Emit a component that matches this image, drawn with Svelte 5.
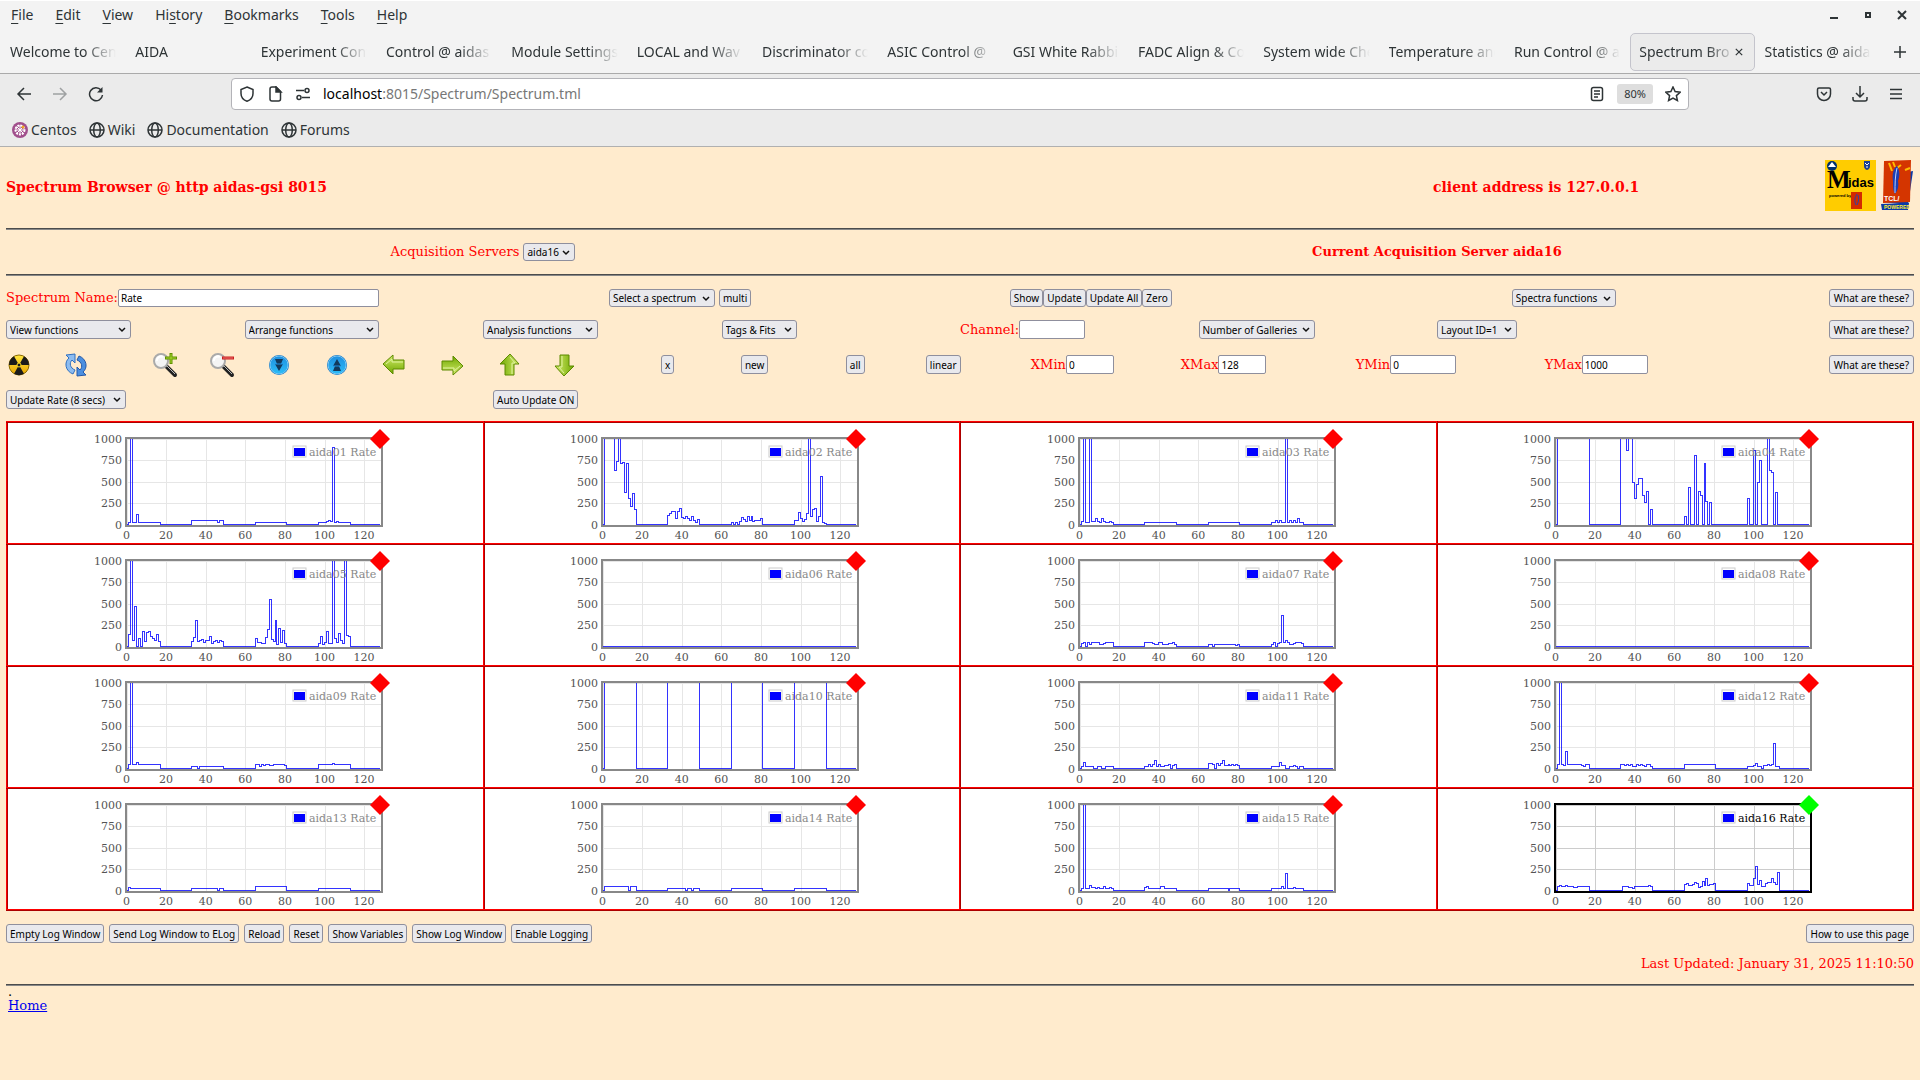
<script lang="ts">
	type Step = [number, number];
	type Gallery = { name: string; active?: boolean; steps: Step[] };

	const menus = [
		['', 'F', 'ile'],
		['', 'E', 'dit'],
		['', 'V', 'iew'],
		['Hi', 's', 'tory'],
		['', 'B', 'ookmarks'],
		['', 'T', 'ools'],
		['', 'H', 'elp']
	];

	const tabs = [
		'Welcome to Cen',
		'AIDA',
		'Experiment Cont',
		'Control @ aidas',
		'Module Settings',
		'LOCAL and Wav',
		'Discriminator co',
		'ASIC Control @',
		'GSI White Rabbi',
		'FADC Align & Co',
		'System wide Che',
		'Temperature and',
		'Run Control @ a',
		'Spectrum Bro',
		'Statistics @ aida'
	];
	let activeTab = $state(13);

	const bookmarks = ['Centos', 'Wiki', 'Documentation', 'Forums'];

	let spectrumName = $state('Rate');
	let channel = $state('');
	let xMin = $state('0');
	let xMax = $state('128');
	let yMin = $state('0');
	let yMax = $state('1000');

	const OFF = 2000; // above the top of the axis, clipped

	// each step is [first bin, counts]; the level holds until the next step
	const galleries: Gallery[] = [
		{ name: 'aida01', steps: [[1, 25], [2, OFF], [3, 25], [5, 120], [6, 25], [17, 0], [33, 50], [46, 25], [47, 50], [49, 0], [65, 25], [81, 0], [97, 25], [101, 35], [102, 50], [103, 30], [104, 900], [105, 25], [106, 35], [107, 25], [113, 0]] },
		{ name: 'aida02', steps: [[1, OFF], [6, 630], [7, 730], [8, OFF], [9, 710], [10, 725], [11, 368], [12, 705], [13, 300], [14, 210], [15, 355], [16, 180], [17, 0], [33, 105], [34, 130], [35, 150], [36, 155], [37, 75], [38, 150], [39, 190], [40, 85], [41, 75], [42, 95], [43, 65], [44, 50], [45, 95], [46, 50], [47, 20], [48, 60], [49, 0], [65, 20], [66, 0], [67, 20], [68, 0], [69, 35], [70, 85], [71, 55], [72, 30], [73, 90], [74, 50], [75, 90], [76, 35], [77, 50], [80, 70], [81, 0], [97, 50], [99, 145], [100, 70], [101, 30], [102, 60], [103, 130], [104, OFF], [105, 95], [106, 180], [107, 190], [108, 30], [109, 90], [110, 560], [111, 20], [112, 10], [113, 0]] },
		{ name: 'aida03', steps: [[1, 35], [2, OFF], [3, 25], [5, OFF], [6, 30], [8, 70], [9, 40], [10, 25], [11, 70], [12, 40], [13, 25], [15, 35], [16, 25], [17, 0], [33, 25], [49, 0], [65, 25], [81, 0], [97, 25], [99, 50], [100, 25], [101, 50], [102, 25], [104, OFF], [105, 25], [106, 50], [107, 25], [108, 50], [109, 25], [110, 65], [111, 25], [113, 0]] },
		{ name: 'aida04', steps: [[1, OFF], [17, 0], [33, OFF], [36, 865], [37, OFF], [39, 490], [40, 305], [41, 460], [42, 530], [43, 540], [44, 340], [45, 260], [46, 380], [47, 0], [48, 180], [49, 0], [65, 90], [66, 0], [67, 430], [68, 0], [70, 800], [71, 0], [72, 380], [73, 340], [74, 0], [75, 705], [76, 270], [77, 0], [78, 255], [79, 0], [97, 300], [98, 0], [100, 860], [101, 0], [102, 490], [103, 750], [104, 0], [107, OFF], [108, 630], [109, 610], [110, 0], [111, 370], [112, 0]] },
		{ name: 'aida05', steps: [[1, 145], [2, OFF], [3, 75], [4, 460], [5, 0], [6, 90], [7, 0], [8, 180], [9, 60], [10, 165], [11, 175], [12, 115], [13, 95], [14, 70], [15, 135], [16, 60], [17, 0], [33, 60], [34, 105], [35, 305], [36, 55], [37, 65], [38, 80], [39, 50], [40, 70], [42, 120], [43, 40], [44, 55], [45, 75], [46, 50], [47, 65], [48, 55], [49, 0], [65, 90], [66, 50], [67, 45], [68, 40], [69, 30], [70, 100], [71, 200], [72, 545], [73, 80], [74, 60], [75, 305], [76, 25], [77, 215], [78, 50], [79, 185], [80, 30], [81, 0], [97, 30], [98, 120], [99, 25], [100, 45], [101, 180], [102, 30], [104, OFF], [105, 90], [106, 45], [107, 150], [108, 65], [109, 30], [110, OFF], [111, 130], [112, 120], [113, 0]] },
		{ name: 'aida06', steps: [] },
		{ name: 'aida07', steps: [[1, 30], [2, 50], [3, 5], [4, 50], [5, 25], [6, 50], [10, 25], [12, 40], [13, 50], [17, 0], [33, 50], [37, 40], [38, 25], [40, 50], [42, 25], [45, 35], [47, 50], [48, 25], [49, 0], [65, 25], [67, 0], [68, 25], [79, 10], [80, 25], [81, 0], [97, 25], [98, 50], [99, 0], [100, 30], [101, 50], [102, 355], [103, 45], [104, 70], [105, 50], [106, 25], [108, 40], [109, 50], [112, 30], [113, 0]] },
		{ name: 'aida08', steps: [] },
		{ name: 'aida09', steps: [[1, 50], [2, OFF], [3, 50], [5, 75], [6, 50], [17, 0], [33, 25], [36, 0], [37, 25], [49, 0], [65, 50], [67, 25], [68, 50], [69, 30], [70, 50], [72, 40], [74, 50], [80, 35], [81, 0], [97, 50], [104, 60], [105, 50], [113, 0]] },
		{ name: 'aida10', steps: [[1, OFF], [17, 0], [33, OFF], [49, 0], [65, OFF], [81, 0], [97, OFF], [113, 0]] },
		{ name: 'aida11', steps: [[1, 25], [2, 75], [3, 25], [7, 0], [9, 25], [11, 0], [13, 25], [17, 0], [33, 25], [35, 50], [36, 25], [37, 45], [38, 90], [39, 25], [40, 45], [41, 25], [43, 35], [45, 50], [46, 0], [47, 30], [48, 50], [49, 0], [65, 60], [67, 50], [68, 0], [69, 60], [70, 30], [71, 60], [72, 95], [73, 40], [75, 50], [76, 30], [77, 50], [78, 35], [79, 45], [80, 30], [81, 0], [97, 25], [101, 75], [102, 30], [104, 0], [106, 25], [108, 40], [109, 25], [110, 0], [111, 25], [113, 0]] },
		{ name: 'aida12', steps: [[1, 50], [2, OFF], [3, 50], [4, 30], [5, 200], [6, 50], [13, 40], [14, 25], [15, 50], [17, 0], [33, 50], [35, 30], [36, 50], [37, 35], [38, 50], [39, 25], [41, 50], [42, 30], [43, 50], [44, 30], [45, 25], [46, 50], [48, 25], [49, 0], [65, 50], [81, 0], [97, 25], [100, 35], [101, 60], [102, 25], [104, 0], [105, 30], [107, 50], [108, 30], [109, 50], [110, 285], [111, 25], [113, 0]] },
		{ name: 'aida13', steps: [[1, 40], [2, 25], [17, 0], [33, 25], [46, 0], [47, 25], [49, 0], [65, 50], [81, 0], [97, 25], [113, 0]] },
		{ name: 'aida14', steps: [[1, 50], [13, 0], [14, 50], [17, 0], [33, 25], [42, 0], [43, 25], [45, 0], [46, 25], [49, 0], [65, 25], [81, 0], [97, 25], [113, 0]] },
		{ name: 'aida15', steps: [[1, 25], [2, OFF], [3, 25], [5, 60], [6, 35], [8, 25], [9, 40], [10, 25], [12, 45], [13, 25], [15, 35], [16, 25], [17, 0], [33, 30], [34, 50], [35, 25], [41, 50], [43, 25], [49, 0], [65, 25], [75, 0], [76, 25], [81, 0], [97, 25], [102, 50], [103, 25], [104, 200], [105, 25], [108, 35], [109, 25], [113, 0]] },
		{ name: 'aida16', active: true, steps: [[1, 50], [2, 60], [3, 50], [5, 60], [6, 45], [7, 50], [9, 30], [11, 50], [17, 0], [34, 50], [37, 40], [39, 25], [40, 50], [47, 60], [48, 50], [49, 0], [65, 75], [66, 85], [67, 60], [69, 70], [70, 90], [71, 85], [72, 30], [73, 50], [74, 100], [75, 60], [76, 140], [77, 60], [78, 75], [80, 80], [81, 0], [97, 80], [98, 55], [100, 145], [101, 275], [102, 70], [103, 120], [104, 50], [106, 80], [107, 95], [109, 140], [110, 90], [111, 75], [112, 205], [113, 0]] }
	];

	const rows = [0, 4, 8, 12].map((i) => galleries.slice(i, i + 4));
	const xTicks = [0, 20, 40, 60, 80, 100, 120];
	const yTicks = [0, 250, 500, 750, 1000];

	const px = (bin: number) => 31.5 + bin * 1.98;
	const py = (counts: number) => 101.5 - counts * 0.086;

	function trace(steps: Step[]) {
		let d = `M${px(0)} ${py(0)}`;
		for (const [bin, counts] of steps) d += `H${px(bin)}V${py(counts)}`;
		return d + `H${px(128)}`;
	}

	const logButtons = [
		'Empty Log Window',
		'Send Log Window to ELog',
		'Reload',
		'Reset',
		'Show Variables',
		'Show Log Window',
		'Enable Logging'
	];
</script>

{#snippet picker(label: string, width: number)}
	<span class="picker" style:width="{width}px">
		<select aria-label={label}>
			<option>{label}</option>
		</select>
		<svg viewBox="0 0 8 6" aria-hidden="true"><path d="M1 1l3 3 3-3" /></svg>
	</span>
{/snippet}

{#snippet arrow()}
	<path d="M2 12L12 3v5h11v9H12v5z" fill="url(#green)" stroke="#5d8a00" />
	<path d="M5 12l6-5v3h11" fill="none" stroke="#dff2a0" />
{/snippet}

{#snippet disc()}
	<circle cx="13" cy="13" r="10" fill="#0a72c4" />
	<circle cx="13" cy="13" r="9" fill="url(#blue)" stroke="#7cc8f5" />
{/snippet}

{#snippet lens()}
	<path d="M14 14l9 9" stroke="#222" stroke-width="4" stroke-linecap="round" />
	<path d="M15 14l8 8" stroke="#bbb" />
	<circle cx="9" cy="9" r="7" fill="#f4f4f4" stroke="#aaa" stroke-width="2" />
	<path d="M5 9a4 4 0 0 1 6-4" stroke="#fff" stroke-width="2" fill="none" />
{/snippet}

<svg class="defs" width="0" height="0" aria-hidden="true">
	<defs>
		<linearGradient id="green" x1="0" y1="0" x2="0" y2="1">
			<stop offset="0" stop-color="#d5ec6c" />
			<stop offset="1" stop-color="#6fa800" />
		</linearGradient>
		<linearGradient id="blue" x1="0" y1="0" x2="0" y2="1">
			<stop offset="0" stop-color="#1f8fe0" />
			<stop offset="1" stop-color="#2cbdf8" />
		</linearGradient>
		<linearGradient id="amber" x1="0" y1="0" x2="0" y2="1">
			<stop offset="0" stop-color="#ffe640" />
			<stop offset="1" stop-color="#e8a400" />
		</linearGradient>
		<clipPath id="plot"><rect x="31" y="16" width="256" height="88" /></clipPath>
	</defs>
</svg>

<div class="chrome">
	<nav class="menubar">
		{#each menus as [before, key, after]}
			<button>{before}<u>{key}</u>{after}</button>
		{/each}
		<div class="window-buttons">
			<button aria-label="Minimise"><svg viewBox="0 0 10 10"><path d="M1 8h8" stroke-width="2" /></svg></button>
			<button aria-label="Maximise"><svg viewBox="0 0 10 10"><path d="M3 3h4v4h-4z" stroke-width="2" /></svg></button>
			<button aria-label="Close"><svg viewBox="0 0 10 10"><path d="M1 1l8 8M9 1l-8 8" stroke-width="2" /></svg></button>
		</div>
	</nav>

	<div class="tabbar">
		{#each tabs as tab, i}
			<div class="tab" class:active={i === activeTab}>
				<button class="tab-label" onclick={() => (activeTab = i)}>{tab}</button>
				{#if i === activeTab}
					<button class="tab-close" aria-label="Close tab"><svg viewBox="0 0 10 10"><path d="M1 1l8 8M9 1l-8 8" /></svg></button>
				{/if}
			</div>
		{/each}
		<button class="new-tab" aria-label="New tab"><svg viewBox="0 0 12 12"><path d="M6 0v12M0 6h12" /></svg></button>
	</div>

	<div class="toolbar">
		<div class="nav-buttons">
			<button aria-label="Back"><svg viewBox="0 0 16 16"><path d="M15 8H2M8 2L2 8l6 6" /></svg></button>
			<button aria-label="Forward" class="faded"><svg viewBox="0 0 16 16"><path d="M1 8h13M8 2l6 6-6 6" /></svg></button>
			<button aria-label="Reload"><svg viewBox="0 0 16 16"><path d="M13 4A6.500 6.500 0 1 0 14.500 9" /><path d="M14.500 1v5.500h-5.500z" fill="currentColor" stroke="none" /></svg></button>
		</div>
		<div class="urlbar">
			<svg viewBox="0 0 16 16"><path d="M8 1l6 2.500v4c0 4-2.500 6.500-6 7.800C4.500 14 2 11.500 2 7.500v-4z" /></svg>
			<svg viewBox="0 0 16 16"><path d="M3 3a2 2 0 0 1 2-2h4l4.500 4.500V13a2 2 0 0 1-2 2H5a2 2 0 0 1-2-2z" /><path d="M9 1v5h5z" fill="currentColor" /></svg>
			<svg viewBox="0 0 16 16"><path d="M1 4.500h8M7 11.500h8" /><circle cx="12" cy="4.500" r="2" /><circle cx="4" cy="11.500" r="2" /></svg>
			<div class="address">localhost<span>:8015/Spectrum/Spectrum.tml</span></div>
			<svg viewBox="0 0 16 16"><rect x="2.500" y="1.500" width="11" height="13" rx="2" /><path d="M5 5h6M5 8h6M5 11h4" /></svg>
			<button class="zoom">80%</button>
			<svg viewBox="0 0 16 16"><path d="M8 1l2.100 4.600 5 .6-3.700 3.400 1 4.900L8 12l-4.400 2.500 1-4.900L.9 6.200l5-.6z" /></svg>
		</div>
		<div class="tool-buttons">
			<button aria-label="Pocket"><svg viewBox="0 0 16 16"><path d="M3 2h10a1.500 1.500 0 0 1 1.500 1.500V8a6.500 6.500 0 0 1-13 0V3.500A1.500 1.500 0 0 1 3 2z" /><path d="M5 6l3 3 3-3" /></svg></button>
			<button aria-label="Downloads"><svg viewBox="0 0 16 16"><path d="M8 0v11M4 7l4 4 4-4M1 11v2a2 2 0 0 0 2 2h10a2 2 0 0 0 2-2v-2" /></svg></button>
			<button aria-label="Menu"><svg viewBox="0 0 16 16"><path d="M2 3.500h12M2 8h12M2 12.500h12" /></svg></button>
		</div>
	</div>

	<div class="bookmarks">
		{#each bookmarks as bookmark, i}
			<a href="#{bookmark}">
				{#if i === 0}
					<svg viewBox="0 0 16 16">
						<circle cx="8" cy="8" r="8" fill="#a14f8c" stroke="none" />
						<g stroke="#fff" stroke-width="1"><circle cx="8" cy="8" r="4.500" stroke-dasharray="2 1" stroke-width="2" /><path d="M8 3v10M3 8h10M4.500 4.500l7 7M11.500 4.500l-7 7" /></g>
						<circle cx="11" cy="5" r="1.500" fill="#efa724" stroke="none" />
					</svg>
				{:else}
					<svg viewBox="0 0 16 16"><circle cx="8" cy="8" r="7" /><ellipse cx="8" cy="8" rx="3.300" ry="7" /><path d="M1 8h14" /></svg>
				{/if}
				{bookmark}
			</a>
		{/each}
	</div>
</div>

<main>
	<header>
		<h1>Spectrum Browser @ http aidas-gsi 8015</h1>
		<h2>client address is 127.0.0.1</h2>
		<div class="logos">
			<svg viewBox="0 0 51 51" width="51" height="51">
				<rect width="51" height="51" fill="#fc0" />
				<circle cx="7" cy="6" r="5" fill="#002f6c" /><path d="M3 7h8L7 2z" fill="#fff" />
				<path d="M39 1h6v5q0 3-3 4-3-1-3-4z" fill="#1c3f94" /><path d="M40 3l2 2 2-2M42 6v2" stroke="#fff" fill="none" />
				<text x="2" y="28" class="midas-m">M</text>
				<text x="23" y="27" class="midas-rest">idas</text>
				<text x="4" y="37" class="powered">powered by</text>
				<rect x="26" y="32" width="11" height="17" fill="#d32a00" />
				<path d="M32 34c-2 3-3 7-1 11M33 35c1 3 1 6-1 10" stroke="#2442b0" fill="none" />
			</svg>
			<svg viewBox="0 0 32 51" width="32" height="51">
				<path d="M2 42l25 3 5-34-5 1-24 28z" fill="#0b3aa8" />
				<path d="M3 1l27-1-1 42-27 1z" fill="#d43500" />
				<path d="M0 44l28-1-1 7-26 0z" fill="#0b3aa8" />
				<path d="M8 3l3 8M12 2l2 5M24 10l5-2M20 5l-4 3" stroke="#fb0" stroke-width="2" />
				<path d="M16 6c-4 3-5 9-4 15 0 6 0 9 2 13 3-4 4-8 3-13 2-5 2-10-1-15z" fill="#1b3fb5" />
				<path d="M16 8c-2 8-2 16-2 25" stroke="#b8d0ff" fill="none" />
				<text x="3" y="41" class="tcl">TCL/</text>
				<text x="3" y="49" class="tcl yellow">POWERED</text>
			</svg>
		</div>
	</header>
	<hr />
	<div class="servers">
		<div>Acquisition Servers {@render picker('aida16', 52)}</div>
		<strong>Current Acquisition Server aida16</strong>
	</div>
	<hr />

	<section class="controls">
		<div class="row names">
			<div class="cell"><label for="name">Spectrum Name:</label><input id="name" class="wide" bind:value={spectrumName} /></div>
			<div class="cell spaced">{@render picker('Select a spectrum', 106)}<button>multi</button></div>
			<div class="cell"><button>Show</button><button>Update</button><button>Update All</button><button>Zero</button></div>
			<div class="cell">{@render picker('Spectra functions', 104)}</div>
			<button class="last">What are these?</button>
		</div>

		<div class="row functions">
			{@render picker('View functions', 125)}
			{@render picker('Arrange functions', 134)}
			{@render picker('Analysis functions', 115)}
			{@render picker('Tags & Fits', 75)}
			<div class="cell"><label for="channel">Channel:</label><input id="channel" class="medium" bind:value={channel} /></div>
			{@render picker('Number of Galleries', 116)}
			{@render picker('Layout ID=1', 80)}
			<button class="last">What are these?</button>
		</div>

		<div class="row tools">
			<button class="icon" aria-label="Radiation">
				<svg viewBox="0 0 26 26">
					<circle cx="13" cy="13" r="10" fill="url(#amber)" stroke="#8a6a00" />
					<path d="M13 13H3A10 10 0 0 1 8 4.300zM13 13L18 4.300A10 10 0 0 1 23 13zM13 13L18 21.700A10 10 0 0 1 8 21.700z" fill="#1a1a1a" />
					<circle cx="13" cy="13" r="2" fill="#1a1a1a" stroke="#fd2" />
				</svg>
			</button>
			<button class="icon" aria-label="Refresh">
				<svg viewBox="0 0 26 26">
					<path d="M10 22C2 19 1 10 6 6L3 3l9-1v9L9 8c-3 3-2 8 3 10z" fill="#8dbcf0" stroke="#2f6fc0" />
					<path d="M16 4c8 3 9 12 4 16l3 3-9 1v-9l3 3c3-3 2-8-3-10z" fill="#4b8fe0" stroke="#2458a8" />
				</svg>
			</button>
			<button class="icon" aria-label="Zoom in">
				<svg viewBox="0 0 26 26">
					{@render lens()}
					<path d="M19 1v11M13 6h12" stroke="#5f9000" stroke-width="3" /><path d="M19 2v9M14 6h10" stroke="#a9d92c" />
				</svg>
			</button>
			<button class="icon" aria-label="Zoom out">
				<svg viewBox="0 0 26 26">
					{@render lens()}
					<path d="M13 6h12" stroke="#c81e1e" stroke-width="3" /><path d="M14 6h10" stroke="#f07070" />
				</svg>
			</button>
			<button class="icon" aria-label="Compress">
				<svg viewBox="0 0 26 26">{@render disc()}<path d="M9 7h8l-2 5h2l-4 7-4-7h2z" fill="#12395c" /><path d="M9 12h8" stroke="#1f8fe0" /></svg>
			</button>
			<button class="icon" aria-label="Expand">
				<svg viewBox="0 0 26 26">{@render disc()}<path d="M9 19h8l-2-5h2l-4-7-4 7h2z" fill="#12395c" /><path d="M9 14h8" stroke="#1f8fe0" /></svg>
			</button>
			<button class="icon" aria-label="Left"><svg viewBox="0 0 26 26">{@render arrow()}</svg></button>
			<button class="icon" aria-label="Right"><svg viewBox="0 0 26 26"><g transform="rotate(180 13 13)">{@render arrow()}</g></svg></button>
			<button class="icon" aria-label="Up"><svg viewBox="0 0 26 26"><g transform="rotate(90 13 13)">{@render arrow()}</g></svg></button>
			<button class="icon" aria-label="Down"><svg viewBox="0 0 26 26"><g transform="rotate(270 13 13)">{@render arrow()}</g></svg></button>
			<button>x</button>
			<button>new</button>
			<button>all</button>
			<button>linear</button>
			<div class="cell"><label for="xmin">XMin</label><input id="xmin" class="narrow" bind:value={xMin} /></div>
			<div class="cell"><label for="xmax">XMax</label><input id="xmax" class="narrow" bind:value={xMax} /></div>
			<div class="cell"><label for="ymin">YMin</label><input id="ymin" class="medium" bind:value={yMin} /></div>
			<div class="cell"><label for="ymax">YMax</label><input id="ymax" class="medium" bind:value={yMax} /></div>
			<button class="last">What are these?</button>
		</div>

		<div class="row updates">
			{@render picker('Update Rate (8 secs)', 120)}
			<button>Auto Update ON</button>
		</div>
	</section>

	<table class="galleries">
		<tbody>
			{#each rows as row}
				<tr>
					{#each row as gallery}
						<td>
							<svg class="chart" class:active={gallery.active} viewBox="0 0 301 120" width="301" height="120">
								{#each xTicks as tick}
									<path class="grid" d="M{Math.round(px(tick)) + 0.5} 16V102" />
									<text x={px(tick)} y="116" text-anchor="middle">{tick}</text>
								{/each}
								{#each yTicks as tick}
									<path class="grid" d="M32 {Math.round(py(tick)) + 0.5}H287" />
									<text x="27" y={py(tick) + 4} text-anchor="end">{tick}</text>
								{/each}
								<rect class="frame" x="31" y="15" width="256" height="88" />
								<path class="trace" d={trace(gallery.steps)} clip-path="url(#plot)" />
								<rect x="198" y="23" width="13" height="11" fill="#fff" stroke="#ccc" />
								<rect x="199" y="25" width="11" height="8" fill="#00f" />
								<text class="legend" x="214" y="33">{gallery.name} Rate</text>
								<path class="marker" d="M285 6l10 10-10 10-10-10z" />
							</svg>
						</td>
					{/each}
				</tr>
			{/each}
		</tbody>
	</table>

	<div class="log-buttons">
		{#each logButtons as label}
			<button>{label}</button>
		{/each}
		<button class="help">How to use this page</button>
	</div>
	<p class="updated">Last Updated: January 31, 2025 11:10:50</p>
	<hr />
	<footer>
		<div class="dot">.</div>
		<a href="#home">Home</a>
	</footer>
</main>

<style>
	:global(body) {
		background: #ffebcd;
	}
	.defs {
		position: absolute;
	}
	button,
	input,
	select {
		box-sizing: border-box;
		margin: 0;
		font: inherit;
		color: inherit;
	}

	/* browser window */
	.chrome {
		font: 14px/20px "Noto Sans", sans-serif;
		color: #2e3436;
		background: #f3f3f3;
		border-top: 1px solid #fff;
		border-bottom: 1px solid #b0b0b0;
	}
	.chrome button {
		padding: 0;
		border: 0;
		background: none;
	}
	.chrome svg {
		display: block;
		width: 16px;
		height: 16px;
		flex-shrink: 0;
		fill: none;
		stroke: currentColor;
		stroke-width: 1.5;
	}
	.menubar {
		display: flex;
		align-items: center;
		gap: 22px;
		height: 28px;
		padding: 0 13px 2px 11px;
	}
	.menubar u {
		text-underline-offset: 3px;
	}
	.window-buttons {
		display: flex;
		gap: 24px;
		margin-left: auto;
	}
	.window-buttons svg {
		width: 10px;
		height: 10px;
	}
	.tabbar {
		display: flex;
		align-items: center;
		height: 42px;
		padding: 0 14px 0 1px;
		border-bottom: 1px solid #aaa;
	}
	.tab {
		display: flex;
		align-items: center;
		flex: 1;
		min-width: 0;
		height: 36px;
		margin-right: 1px;
		padding: 0 8px;
		border: 1px solid transparent;
		border-radius: 5px;
	}
	.tab.active {
		background: #ebebeb;
		border-color: #c4c4cc;
	}
	.tab-label {
		flex: 1;
		min-width: 0;
		overflow: hidden;
		white-space: nowrap;
		text-align: left;
		mask-image: linear-gradient(to right, #000 70%, transparent);
	}
	.tab-close {
		margin-right: 3px;
	}
	.tab-close svg {
		width: 8px;
		height: 8px;
	}
	.new-tab {
		margin-left: 13px;
	}
	.new-tab svg {
		width: 12px;
		height: 12px;
	}
	.toolbar {
		display: flex;
		align-items: center;
		height: 40px;
		background: #ebebeb;
	}
	.nav-buttons,
	.tool-buttons {
		display: flex;
		gap: 20px;
	}
	.nav-buttons {
		width: 231px;
		box-sizing: border-box;
		padding-left: 16px;
	}
	.faded {
		opacity: 0.4;
	}
	.urlbar {
		display: flex;
		align-items: center;
		gap: 12px;
		flex: 1;
		box-sizing: border-box;
		height: 32px;
		padding: 0 7px;
		background: #fff;
		border: 1px solid #b3b3b8;
		border-radius: 4px;
	}
	.address {
		flex: 1;
		color: #000;
	}
	.address span {
		color: #777;
	}
	.chrome .zoom {
		height: 20px;
		padding: 0 7px;
		background: #dedede;
		border-radius: 3px;
		font-size: 11px;
	}
	.tool-buttons {
		padding: 0 16px 0 127px;
	}
	.bookmarks {
		display: flex;
		align-items: center;
		gap: 12px;
		height: 32px;
		padding-left: 12px;
		background: #ebebeb;
	}
	.bookmarks a {
		display: flex;
		align-items: center;
		gap: 3px;
		color: inherit;
		text-decoration: none;
	}

	/* page */
	main {
		padding: 0 6px;
		font: 13px/16px "DejaVu Serif", serif;
		color: #f00;
	}
	header {
		display: flex;
		align-items: center;
		height: 79px;
		padding-bottom: 2px;
	}
	h1,
	h2 {
		margin: 0;
		font-size: 14px;
		line-height: 16px;
	}
	h1 {
		flex: 1427;
	}
	h2 {
		flex: 392;
	}
	.logos {
		display: flex;
		gap: 5px;
		padding: 0 1px 2px 0;
	}
	.midas-m {
		font: bold 25px "Liberation Serif", serif;
	}
	.midas-rest {
		font: bold 13px "Liberation Sans", sans-serif;
	}
	.powered {
		font: bold 4px "Liberation Sans", sans-serif;
	}
	.tcl {
		font: bold 7px "Liberation Sans", sans-serif;
		fill: #fff;
	}
	.tcl.yellow {
		font-size: 5px;
		fill: #fe3;
	}
	hr {
		height: 0;
		margin: 0;
		border: 0;
		border-top: 1px solid #4c4c4c;
		border-bottom: 1px solid #888;
	}
	.servers {
		display: grid;
		grid-template-columns: 1fr 1fr;
		align-items: center;
		height: 44px;
		text-align: center;
	}
	.picker {
		display: inline-block;
		position: relative;
		vertical-align: middle;
	}
	.picker select {
		display: block;
		appearance: none;
		width: 100%;
	}
	.picker svg {
		position: absolute;
		right: 5px;
		top: 7px;
		width: 8px;
		height: 6px;
		fill: none;
		stroke: #111;
		stroke-width: 1.5;
		pointer-events: none;
	}
	main button,
	select {
		height: 18px;
		padding: 0 3px;
		background: #e9e9ed;
		border: 1px solid #8f8f9d;
		border-radius: 3px;
		font: 10px/14px "Noto Sans", sans-serif;
		color: #000;
		white-space: nowrap;
	}
	input {
		height: 18px;
		padding: 0 2px;
		background: #fff;
		border: 1px solid #8f8f9d;
		border-radius: 2px;
		font: 10px/14px "Noto Sans", sans-serif;
		color: #000;
	}
	.wide {
		width: 261px;
	}
	.medium {
		width: 66px;
	}
	.narrow {
		width: 48px;
	}
	.controls {
		display: flex;
		flex-direction: column;
		gap: 16px;
		padding: 13px 0 12px;
	}
	.row {
		display: grid;
		grid-template-rows: 100%;
		align-items: center;
		justify-items: start;
		height: 19px;
	}
	.row.names {
		height: 18px;
		margin-bottom: -3px;
		grid-template-columns: 603fr 401fr 502fr 317fr auto;
	}
	.row.functions {
		grid-template-columns: repeat(8, minmax(0, 1fr));
	}
	.row.tools {
		grid-template-columns: 57fr 89fr 57fr 57fr 58fr 57fr 58fr 57fr 56fr 109fr 80fr 105fr 80fr 105fr 150fr 175fr 189fr 284fr auto;
	}
	.row.updates {
		grid-template-columns: 487fr 1421fr;
	}
	.row:not(.names) :is(button, input, select),
	.log-buttons button {
		height: 19px;
	}
	main .last,
	main .help {
		padding: 0 4px;
	}
	.last {
		justify-self: end;
	}
	.cell {
		display: flex;
		align-items: center;
	}
	.spaced {
		gap: 4px;
	}
	.row.tools .icon {
		width: 26px;
		height: 26px;
		padding: 0;
		background: none;
		border: 0;
	}
	.icon svg {
		display: block;
		width: 26px;
		height: 26px;
	}

	.galleries {
		width: 100%;
		table-layout: fixed;
		border-collapse: collapse;
		border: 2px ridge #f00;
		background: #fff;
	}
	td {
		padding: 0;
		border: 2px ridge #f00;
	}
	.chart {
		display: block;
		margin: 0 auto;
		font: 11px "DejaVu Serif", serif;
		fill: #545454;
	}
	.grid {
		stroke: #e6e6e6;
	}
	.frame {
		fill: none;
		stroke: #888;
		stroke-width: 2;
	}
	.trace {
		fill: none;
		stroke: #00f;
		stroke-opacity: 0.8;
		shape-rendering: crispEdges;
	}
	.legend {
		fill: #888;
	}
	.marker {
		fill: #f00;
	}
	.chart.active .grid {
		stroke: #ccc;
	}
	.chart.active .frame {
		stroke: #000;
	}
	.chart.active .legend {
		fill: #000;
	}
	.chart.active .marker {
		fill: #0f0;
	}

	.log-buttons {
		display: flex;
		gap: 5px;
		margin-top: 13px;
	}
	.help {
		margin-left: auto;
	}
	.updated {
		margin: 13px 0 12px;
		text-align: right;
	}
	footer {
		padding: 0 2px;
	}
	.dot {
		height: 12px;
		line-height: 12px;
		color: #000;
	}
	footer a {
		color: #00e;
	}
</style>
